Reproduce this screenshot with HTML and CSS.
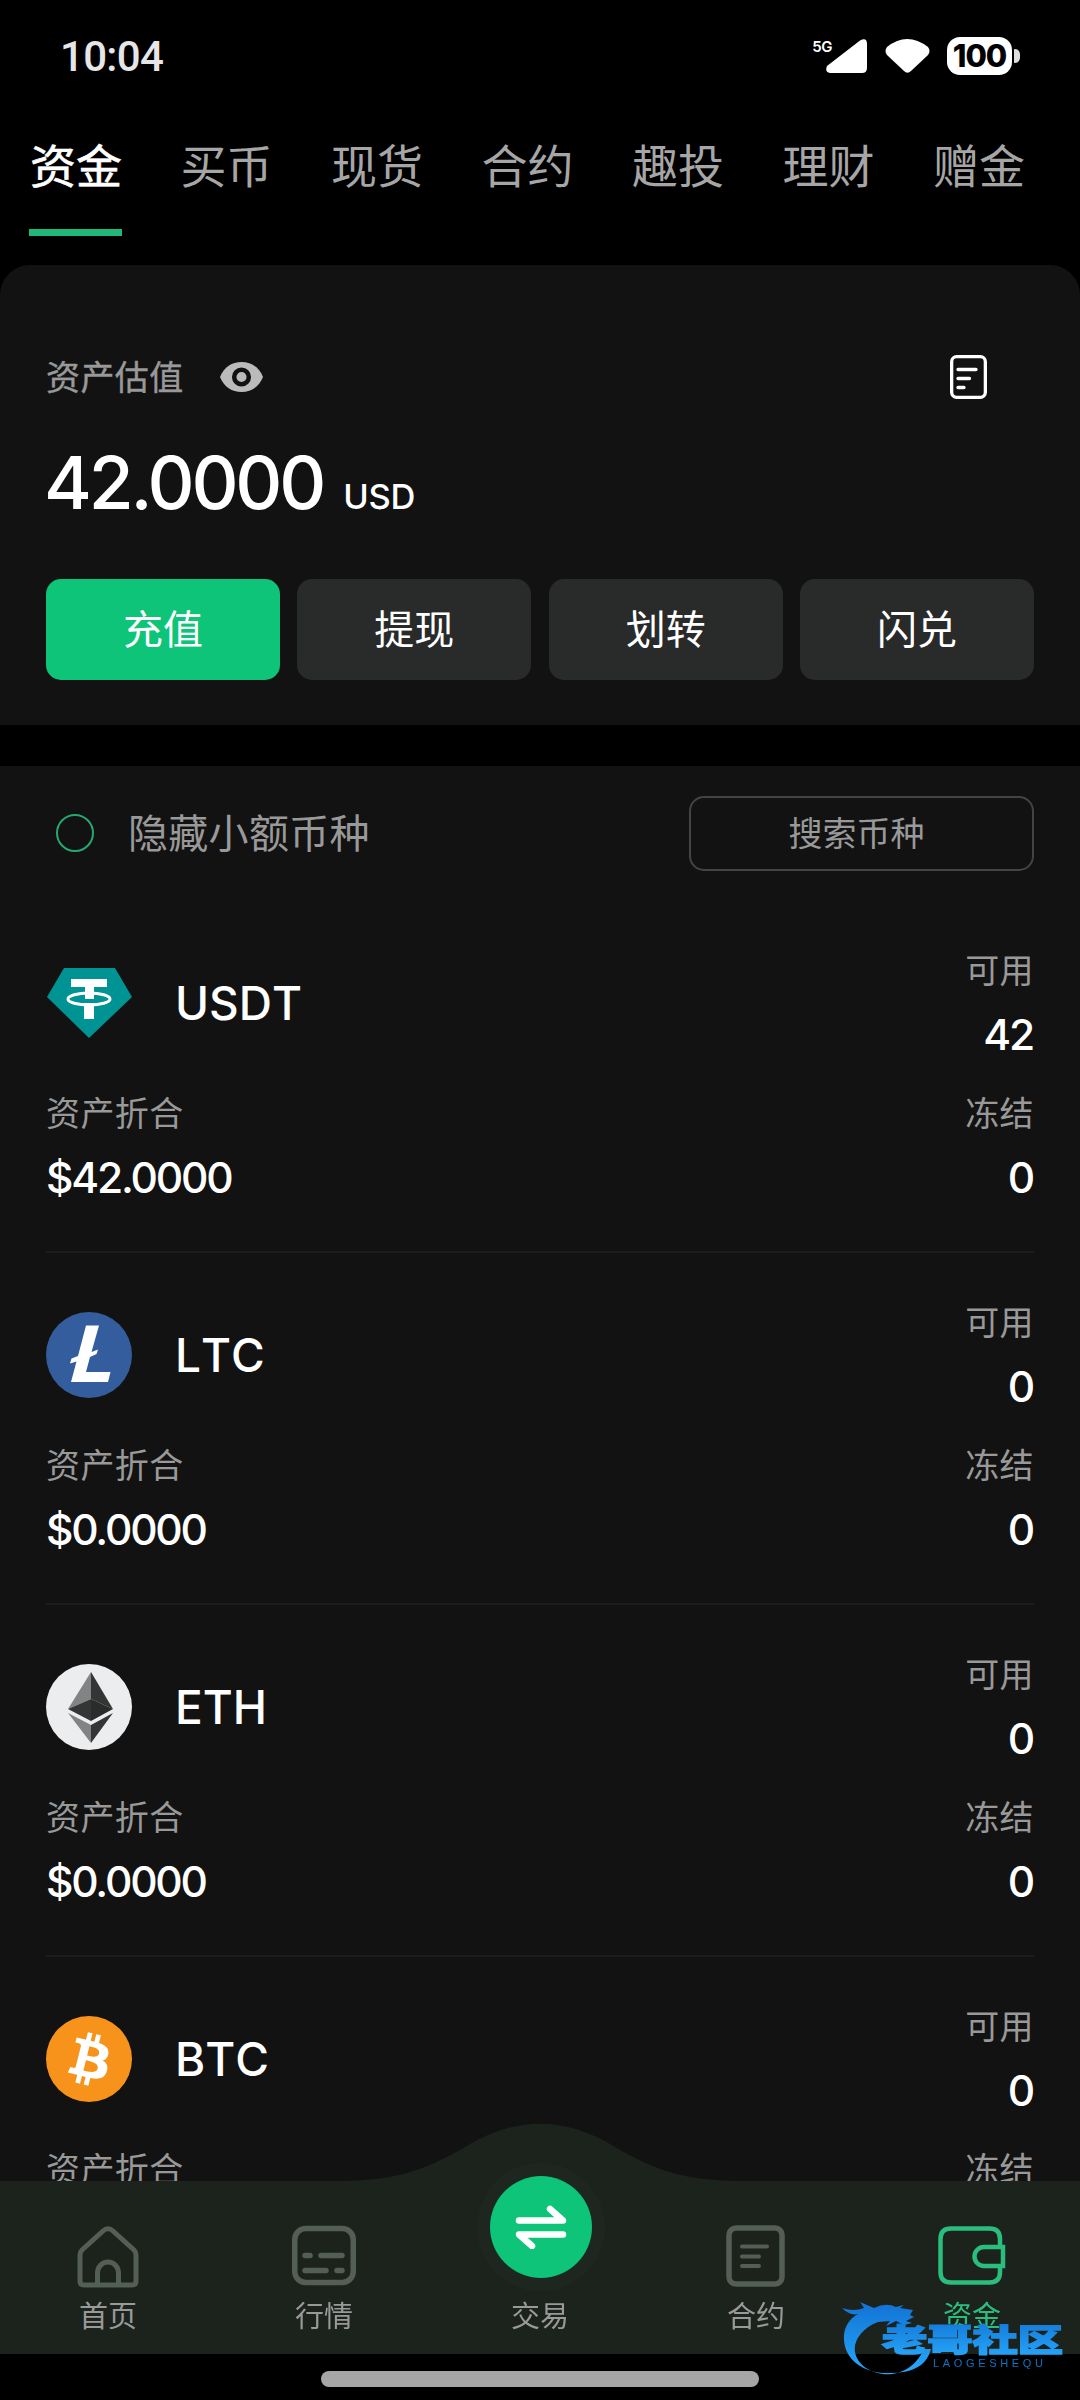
FILE: index.html
```html
<!DOCTYPE html>
<html lang="zh-CN">
<head>
    <meta charset="UTF-8">
    <meta name="viewport" content="width=device-width, initial-scale=1.0">
    <title>资金</title>
    <link rel="stylesheet" href="styles.css">
</head>
<body>
    <div class="status-bar">
        <span class="time">10:04</span>
        <div class="status-icons">
            <span class="network">5G</span>
            <svg class="signal" width="42" height="34" viewBox="0 0 42 34">
                <path d="M34 1.500Q41 -2 41 5V29Q41 34 36 34H4Q-1.500 33 1 27Z" fill="#fff"/>
            </svg>
            <svg class="wifi" width="45" height="34" viewBox="0 0 45 34">
                <path d="M2 8Q22 -8 43 8Q46 12 43 16L26 32Q22.500 35.500 19 32L2 16Q-1 12 2 8Z" fill="#fff"/>
            </svg>
            <span class="battery">100</span>
            <span class="battery-tip"></span>
        </div>
    </div>

    <nav class="tabs">
        <a class="tab active">资金</a>
        <a class="tab">买币</a>
        <a class="tab">现货</a>
        <a class="tab">合约</a>
        <a class="tab">趣投</a>
        <a class="tab">理财</a>
        <a class="tab">赠金</a>
    </nav>

    <section class="summary">
        <div class="summary-head">
            <span class="label">资产估值</span>
            <svg class="eye" width="43" height="30" viewBox="0 0 43 30">
                <path d="M0 15C4 5 12 0 21.500 0S39 5 43 15C39 25 31 30 21.500 30S4 25 0 15Z" fill="#bbb"/>
                <circle cx="21.500" cy="15" r="7.300" fill="#bbb" stroke="#121212" stroke-width="4.500"/>
            </svg>
            <svg class="bill" width="37" height="44" viewBox="0 0 37 44">
                <g fill="none" stroke="#fff" stroke-width="3.300">
                    <rect x="1.650" y="1.650" width="33.700" height="40.700" rx="5"/>
                    <path d="M8 14.500H26M8 23.500H19.500M8 32.500H14" stroke-linecap="round"/>
                </g>
            </svg>
        </div>
        <div class="amount">42.0000<span class="unit">USD</span></div>
        <div class="actions">
            <button class="btn primary">充值</button>
            <button class="btn">提现</button>
            <button class="btn">划转</button>
            <button class="btn">闪兑</button>
        </div>
    </section>

    <section class="assets">
        <div class="filter">
            <span class="radio"></span>
            <span class="filter-text">隐藏小额币种</span>
            <div class="search">搜索币种</div>
        </div>

        <div class="coin">
            <div class="coin-row">
                <svg class="logo" viewBox="0 0 86 86">
                    <path d="M18 8H69L86 37L43 78L1 37Z" fill="#009393"/>
                    <path d="M25 19H61V27H48V39H39V27H25ZM38 43H48V59H38Z" fill="#fff"/>
                    <ellipse cx="43" cy="39" rx="21" ry="6" fill="none" stroke="#fff" stroke-width="3"/>
                </svg>
                <span class="coin-name">USDT</span>
                <div class="cell right"><span class="label">可用</span><span class="value">42</span></div>
            </div>
            <div class="coin-row">
                <div class="cell"><span class="label">资产折合</span><span class="value">$42.0000</span></div>
                <div class="cell right"><span class="label">冻结</span><span class="value">0</span></div>
            </div>
        </div>

        <div class="coin">
            <div class="coin-row">
                <svg class="logo" viewBox="0 0 86 86">
                    <circle cx="43" cy="43" r="43" fill="#345d9d"/>
                    <path d="M40 13.500H53L45.500 40L52 37.500L50.500 42L44 45L40 60H64.500L62 70H25L30.500 49.500L24 51.500L25.500 46.500L32 44Z" fill="#fff"/>
                </svg>
                <span class="coin-name">LTC</span>
                <div class="cell right"><span class="label">可用</span><span class="value">0</span></div>
            </div>
            <div class="coin-row">
                <div class="cell"><span class="label">资产折合</span><span class="value">$0.0000</span></div>
                <div class="cell right"><span class="label">冻结</span><span class="value">0</span></div>
            </div>
        </div>

        <div class="coin">
            <div class="coin-row">
                <svg class="logo" viewBox="0 0 86 86">
                    <circle cx="43" cy="43" r="43" fill="#ecedef"/>
                    <path d="M45 8L22 45L45 35Z" fill="#828384"/>
                    <path d="M45 8L67 45L45 35Z" fill="#343535"/>
                    <path d="M22 45L45 35V57Z" fill="#343535"/>
                    <path d="M67 45L45 35V57Z" fill="#2a2b2b"/>
                    <path d="M22 49L45 61V79Z" fill="#828384"/>
                    <path d="M67 49L45 61V79Z" fill="#343535"/>
                </svg>
                <span class="coin-name">ETH</span>
                <div class="cell right"><span class="label">可用</span><span class="value">0</span></div>
            </div>
            <div class="coin-row">
                <div class="cell"><span class="label">资产折合</span><span class="value">$0.0000</span></div>
                <div class="cell right"><span class="label">冻结</span><span class="value">0</span></div>
            </div>
        </div>

        <div class="coin">
            <div class="coin-row">
                <svg class="logo" viewBox="0 0 32 32">
                    <circle cx="16" cy="16" r="16" fill="#f7931a"/>
                    <path fill="#fff" d="M23.189 14.020c.314-2.096-1.283-3.223-3.465-3.975l.708-2.840-1.728-.430-.690 2.765c-.454-.114-.920-.220-1.385-.326l.695-2.783L15.596 6l-.708 2.839c-.376-.086-.746-.170-1.104-.260l.002-.009-2.384-.595-.460 1.846s1.283.294 1.256.312c.700.175.826.638.805 1.006l-.806 3.235c.048.012.110.030.180.057l-.183-.045-1.130 4.532c-.086.212-.303.531-.793.410.018.025-1.256-.313-1.256-.313l-.858 1.978 2.250.561c.418.105.828.215 1.231.318l-.715 2.872 1.727.430.708-2.840c.472.127.930.245 1.378.357l-.706 2.828 1.728.430.715-2.866c2.948.558 5.164.333 6.097-2.333.752-2.146-.037-3.385-1.588-4.192 1.130-.260 1.980-1.003 2.207-2.538zm-3.950 5.538c-.533 2.147-4.148.986-5.320.695l.950-3.805c1.172.293 4.929.872 4.370 3.110zm.535-5.569c-.487 1.953-3.495.960-4.470.717l.860-3.450c.975.243 4.118.696 3.610 2.733z"/>
                </svg>
                <span class="coin-name">BTC</span>
                <div class="cell right"><span class="label">可用</span><span class="value">0</span></div>
            </div>
            <div class="coin-row">
                <div class="cell"><span class="label">资产折合</span><span class="value">$0.0000</span></div>
                <div class="cell right"><span class="label">冻结</span><span class="value">0</span></div>
            </div>
        </div>
    </section>

    <footer class="bottom">
        <svg class="hump" width="400" height="59" viewBox="0 0 400 59">
            <path d="M0 58C60 58 90 44 125 24C175 -7 225 -7 275 24C310 44 340 58 400 58V59H0Z" fill="#1c231d"/>
        </svg>
        <nav class="bottom-nav">
            <a class="nav-item">
                <svg width="64" height="64" viewBox="0 0 64 64" fill="none" stroke="#535e55" stroke-width="5">
                    <path d="M4 30Q4 27 6 25L27 6Q32 1.500 37 6L58 25Q60 27 60 30V56Q60 60 56 60H8Q4 60 4 56Z"/>
                    <path d="M21.500 59V48A10.500 11 0 0 1 42.500 48V59"/>
                </svg>
                <span>首页</span>
            </a>
            <a class="nav-item">
                <svg width="64" height="64" viewBox="0 0 64 64" fill="none" stroke="#535e55" stroke-width="5.500">
                    <rect x="2.750" y="3.500" width="58.500" height="54" rx="11"/>
                    <path d="M13 30.500H18M29 30.500H50M13 45.500H34M45 45.500H50" stroke-linecap="round"/>
                </svg>
                <span>行情</span>
            </a>
            <a class="nav-item trade">
                <span class="trade-btn">
                    <svg width="52" height="44" viewBox="0 0 52 44" fill="none" stroke="#fff" stroke-width="6.500" stroke-linecap="round" stroke-linejoin="round">
                        <path d="M4 15.500H48L35 4M48 29.500H4L17 41"/>
                    </svg>
                </span>
                <span>交易</span>
            </a>
            <a class="nav-item">
                <svg width="64" height="64" viewBox="0 0 64 64" fill="none" stroke="#535e55" stroke-width="5.500">
                    <rect x="5" y="3" width="53" height="56" rx="7"/>
                    <path d="M18 21.500H43M18 31.500H35M18 41H35" stroke-width="4" stroke-linecap="round"/>
                </svg>
                <span>合约</span>
            </a>
            <a class="nav-item active">
                <svg width="68" height="64" viewBox="0 0 68 64" fill="none" stroke="#2bbd7e" stroke-width="4.500">
                    <path d="M62 22V14Q62 3.500 51.500 3.500H13Q2.500 3.500 2.500 14V47Q2.500 57.500 13 57.500H51.500Q62 57.500 62 47V41"/>
                    <path d="M65 22H46A9.500 9.500 0 0 0 46 41H65Z"/>
                </svg>
                <span>资金</span>
            </a>
        </nav>
        <div class="home-area"><div class="home-bar"></div></div>

        <!-- community badge, floats over the nav -->
        <svg class="badge" width="240" height="90" viewBox="0 0 240 90">
            <defs>
                <linearGradient id="blue" x1="0" y1="0" x2="0" y2="1">
                    <stop offset="0" stop-color="#1272d4"/>
                    <stop offset="1" stop-color="#27a9fb"/>
                </linearGradient>
            </defs>
            <path d="M2 12Q14 16 24 12L20 6L34 12Q46 6 56 11L64 9L60 12L73 14L70 19L74 21L66 25L72 27L64 29L56 25L46 30L50 25L38 26C22 32 13 45 15 56C19 80 66 92 84 53H91C86 73 67 77 50 77C24 78 5 64 4 44C3 34 8 23 18 18Q10 20 2 12Z" fill="url(#blue)"/>
            <text class="badge-name" x="42" y="55" textLength="181" lengthAdjust="spacingAndGlyphs" fill="url(#blue)" stroke="url(#blue)">老哥社区</text>
            <text class="badge-sub" x="93" y="71" textLength="110" fill="#1272c4">LAOGESHEQU</text>
        </svg>
    </footer>
</body>
</html>
```
FILE: styles.css
```css
* {
    box-sizing: border-box;
}

body {
    margin: 0;
    width: 1080px;
    height: 2400px;
    overflow: hidden;
    background: #000;
    color: #fff;
    font-family: Inter, "Noto Sans CJK SC", sans-serif;
}

.status-bar {
    display: flex;
    justify-content: space-between;
    align-items: center;
    height: 112px;
    padding: 0 60px;
}

.time {
    font: 500 42px Roboto, sans-serif;
    letter-spacing: -0.700px;
    color: #e6e6e6;
}

.status-icons {
    display: flex;
    align-items: center;
}

.network {
    align-self: flex-start;
    margin: 2px -6px 0 0;
    font-size: 15px;
    font-weight: 600;
    letter-spacing: -0.500px;
    line-height: 16px;
}

.wifi {
    margin: 0 17px;
}

.battery {
    width: 65px;
    height: 38px;
    border-radius: 13px;
    background: #fff;
    color: #000;
    font-size: 31px;
    font-weight: 800;
    letter-spacing: -1px;
    line-height: 38px;
    text-align: center;
}

.battery-tip {
    width: 6px;
    height: 14px;
    margin-left: 2px;
    border-radius: 1px 6px 6px 1px;
    background: #ddd;
}

.tabs {
    display: flex;
    gap: 57.500px;
    height: 153px;
    padding: 0 29px;
    font-size: 46px;
}

.tab {
    height: 124px;
    line-height: 108px;
    color: #a6a6a6;
    white-space: nowrap;
    text-indent: 1px;
}

.tab.active {
    color: #fff;
    -webkit-text-stroke: 0.600px #fff;
    border-bottom: 7px solid #20b878;
}

.summary {
    height: 460px;
    padding: 72px 46px 0;
    border-radius: 30px 30px 0 0;
    background: #121212;
}

.summary-head {
    display: flex;
    align-items: center;
    height: 80px;
}

.label {
    font-size: 34px;
    letter-spacing: 0.400px;
    color: #999;
}

.summary-head .label {
    padding-bottom: 3px;
    -webkit-text-stroke: 0.400px #999;
}

.eye {
    margin-left: 36px;
}

.bill {
    margin-left: auto;
    margin-right: 47px;
}

.amount {
    height: 162px;
    margin-left: -2px;
    line-height: 132px;
    font-size: 73px;
    font-weight: 500;
    letter-spacing: -3.200px;
}

.unit {
    margin-left: 20px;
    font-size: 34.500px;
    letter-spacing: -0.200px;
}

.actions {
    display: grid;
    grid-template-columns: repeat(4, 1fr);
    gap: 17.500px;
}

.btn {
    height: 101px;
    padding: 0 0 5px;
    border: none;
    border-radius: 15px;
    background: #292a2a;
    color: #fff;
    font-family: inherit;
    font-size: 40px;
}

.primary {
    background: #0dc478;
}

.assets {
    height: 1588px;
    margin-top: 41px;
    padding: 0 46px;
    background: #121212;
    overflow: hidden;
}

.filter {
    display: flex;
    align-items: center;
    height: 135px;
    padding-bottom: 1px;
}

.radio {
    width: 38px;
    height: 38px;
    margin-left: 10px;
    border: 2.500px solid #25a870;
    border-radius: 50%;
}

.filter-text {
    margin-left: 34px;
    padding-bottom: 4px;
    font-size: 40px;
    letter-spacing: 0.300px;
    color: #999;
}

.search {
    width: 345px;
    height: 75px;
    margin-left: auto;
    padding-right: 10px;
    border: 2.500px solid #444;
    border-radius: 15px;
    color: #999;
    font-size: 34px;
    line-height: 72px;
    text-align: center;
}

.coin {
    height: 352px;
    padding-top: 38px;
    border-bottom: 2px solid #1c1c1c;
}

.coin-row {
    display: flex;
    align-items: center;
    justify-content: space-between;
    margin-bottom: 15px;
}

.logo {
    width: 86px;
    height: 86px;
}

.coin-name {
    flex: 1;
    margin-left: 43px;
    font-size: 46px;
    font-weight: 500;
    font-kerning: none;
}

.cell {
    display: flex;
    flex-direction: column;
    line-height: 64px;
}

.right {
    text-align: right;
}

.value {
    font-size: 42.500px;
    font-weight: 500;
    letter-spacing: -2.200px;
}

.right .value {
    margin-right: 1px;
}

.bottom {
    position: fixed;
    left: 0;
    top: 2123px;
    width: 1080px;
}

.hump {
    display: block;
    margin: 0 auto -1px;
}

.bottom-nav {
    display: grid;
    grid-template-columns: repeat(5, 1fr);
    height: 173px;
    background: #1c231d;
}

.nav-item {
    display: flex;
    flex-direction: column;
    align-items: center;
    padding-top: 44px;
    font-size: 29px;
    line-height: 56px;
    color: #999;
}

.nav-item.active {
    color: #2bbd7e;
}

.trade {
    padding-top: 0;
}

.trade-btn {
    display: flex;
    align-items: center;
    justify-content: center;
    width: 102px;
    height: 102px;
    margin: -5px 0 11px 2px;
    border-radius: 50%;
    background: #0dc478;
    box-shadow: 0 0 0 13px #1e271f;
}

.home-area {
    height: 46px;
    padding-top: 17px;
    background: #000;
}

.home-bar {
    width: 438px;
    height: 16px;
    margin: 0 auto;
    border-radius: 8px;
    background: #a6a6a6;
}

.badge {
    position: absolute;
    left: 840px;
    top: 173px;
}

.badge-name {
    font-family: "Noto Sans CJK SC", sans-serif;
    font-size: 31px;
    font-weight: 900;
    stroke-width: 1.500px;
}

.badge-sub {
    font-family: "Liberation Sans", sans-serif;
    font-size: 11px;
}
```
